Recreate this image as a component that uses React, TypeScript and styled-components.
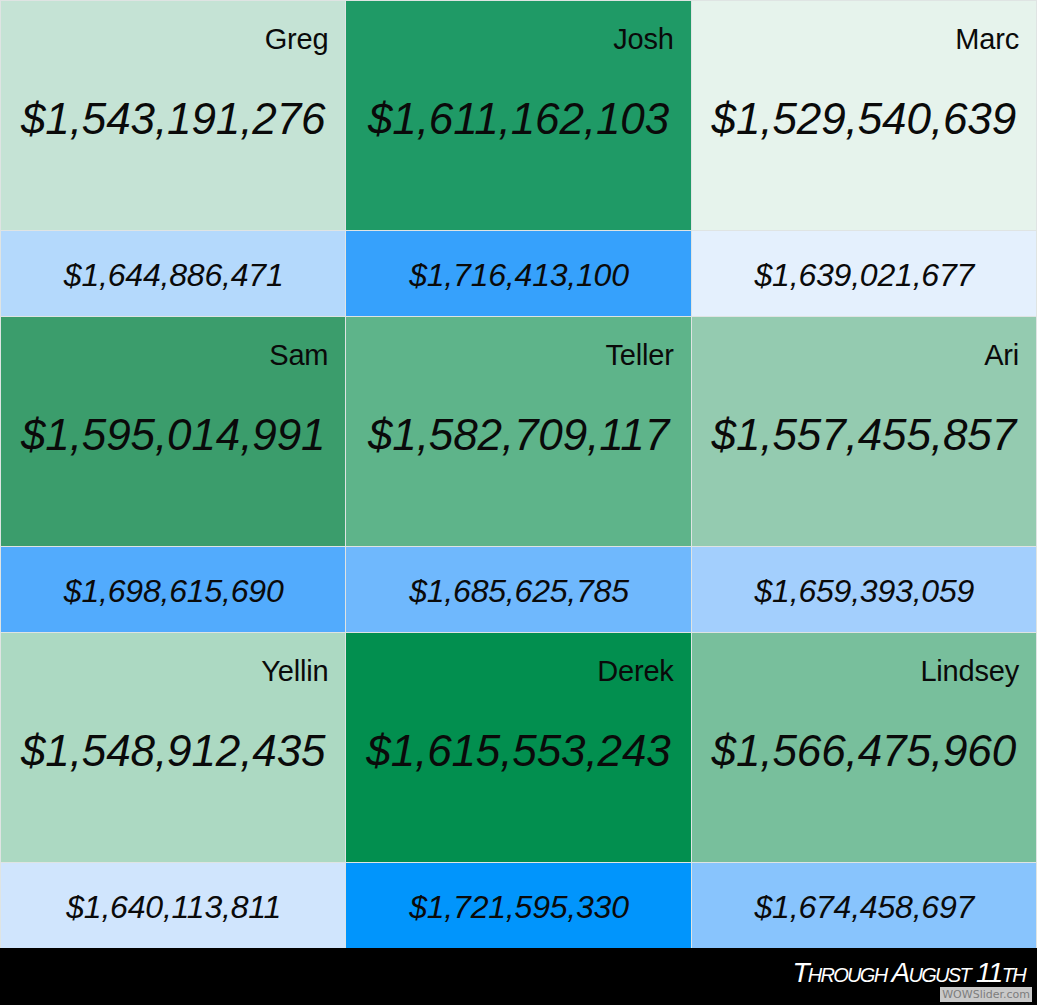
import React from "react";
import styled, { createGlobalStyle } from "styled-components";

const Global = createGlobalStyle`
  html, body { margin: 0; padding: 0; background: #000; }
  body { font-family: "Liberation Sans", Arial, sans-serif; }
`;

const Page = styled.div`
  width: 1037px;
  height: 1005px;
  display: flex;
  flex-direction: column;
  position: relative;
  overflow: hidden;
`;

const Board = styled.div`
  display: grid;
  grid-template-columns: repeat(3, 1fr);
  grid-template-rows: 229px 85px 229px 85px 229px 85px;
  gap: 1px;
  padding: 1px 1px 0 1px;
  background: #dfe4e3;
`;

const BigCell = styled.div<{ $bg: string }>`
  background: ${(p) => p.$bg};
  display: flex;
  flex-direction: column;
  padding-top: 22px;
  color: #0a0a0a;
`;

const Name = styled.div`
  font-size: 29px;
  line-height: 32px;
  text-align: right;
  padding-right: 17px;
  letter-spacing: -0.2px;
`;

const BigValue = styled.div`
  margin-top: 39px;
  font-size: 44px;
  line-height: 50px;
  font-style: italic;
  text-align: center;
  letter-spacing: -0.1px;
`;

const SmallCell = styled.div<{ $bg: string }>`
  background: ${(p) => p.$bg};
  display: flex;
  align-items: center;
  justify-content: center;
  padding: 3px 0 0 1px;
  font-size: 32px;
  font-style: italic;
  color: #0a0a0a;
  letter-spacing: -0.2px;
`;

const Footer = styled.div`
  flex: 1;
  background: #000;
  color: #fff;
  text-align: right;
  padding: 8px 12px 0 0;
  font-size: 28px;
  line-height: 34px;
  font-style: italic;
  font-variant: small-caps;
  letter-spacing: -1.7px;
`;

const Watermark = styled.div`
  position: absolute;
  right: 5px;
  bottom: 3px;
  background: #c9c9c9;
  color: #7d7d7d;
  font-family: "DejaVu Sans", sans-serif;
  font-size: 11px;
  line-height: 15px;
  padding: 0 2px;
`;

type Person = { name: string; big: string; bigBg: string; small: string; smallBg: string };

const rows: Person[][] = [
  [
    { name: "Greg", big: "$1,543,191,276", bigBg: "#c5e3d5", small: "$1,644,886,471", smallBg: "#b4d9fc" },
    { name: "Josh", big: "$1,611,162,103", bigBg: "#1f9a66", small: "$1,716,413,100", smallBg: "#36a1fc" },
    { name: "Marc", big: "$1,529,540,639", bigBg: "#e6f3ec", small: "$1,639,021,677", smallBg: "#e4f0fd" },
  ],
  [
    { name: "Sam", big: "$1,595,014,991", bigBg: "#3b9d6c", small: "$1,698,615,690", smallBg: "#52abfd" },
    { name: "Teller", big: "$1,582,709,117", bigBg: "#5eb48a", small: "$1,685,625,785", smallBg: "#6fb8fd" },
    { name: "Ari", big: "$1,557,455,857", bigBg: "#94cbb0", small: "$1,659,393,059", smallBg: "#a3cffd" },
  ],
  [
    { name: "Yellin", big: "$1,548,912,435", bigBg: "#acd9c2", small: "$1,640,113,811", smallBg: "#d0e5fd" },
    { name: "Derek", big: "$1,615,553,243", bigBg: "#028f4f", small: "$1,721,595,330", smallBg: "#0195fc" },
    { name: "Lindsey", big: "$1,566,475,960", bigBg: "#78bf9c", small: "$1,674,458,697", smallBg: "#88c4fd" },
  ],
];

export default function App() {
  return (
    <Page>
      <Global />
      <Board>
        {rows.map((row, i) => (
          <React.Fragment key={i}>
            {row.map((p) => (
              <BigCell key={p.name} $bg={p.bigBg}>
                <Name>{p.name}</Name>
                <BigValue>{p.big}</BigValue>
              </BigCell>
            ))}
            {row.map((p) => (
              <SmallCell key={p.name + "s"} $bg={p.smallBg}>
                {p.small}
              </SmallCell>
            ))}
          </React.Fragment>
        ))}
      </Board>
      <Footer>Through August 11th</Footer>
      <Watermark>WOWSlider.com</Watermark>
    </Page>
  );
}
